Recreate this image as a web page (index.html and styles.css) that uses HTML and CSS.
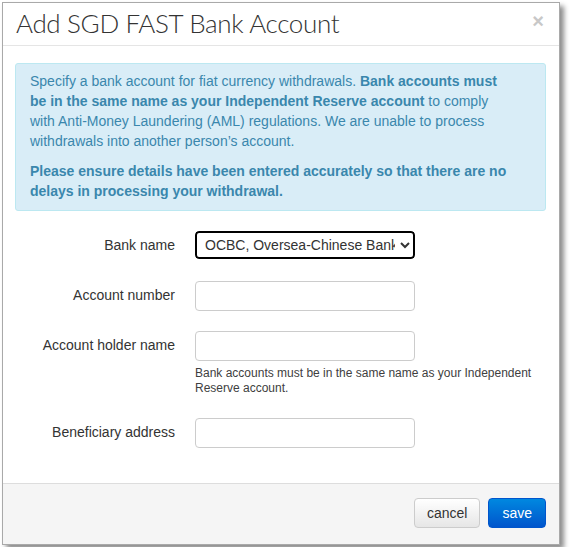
FILE: index.html
```html
<!DOCTYPE html>
<html lang="en">
<head>
    <meta charset="UTF-8">
    <title>Add SGD FAST Bank Account</title>
    <link rel="stylesheet" href="styles.css">
</head>
<body>
    <div class="modal">
        <div class="modal-header">
            <h3>Add SGD FAST Bank Account</h3>
            <span class="close">&times;</span>
        </div>
        <div class="modal-body">
            <div class="alert">
                <p>Specify a bank account for fiat currency withdrawals. <b>Bank accounts must be in the same name as your Independent Reserve account</b> to comply with Anti-Money Laundering (AML) regulations. We are unable to process withdrawals into another person’s account.</p>
                <p><b>Please ensure details have been entered accurately so that there are no delays in processing your withdrawal.</b></p>
            </div>
            <form class="form">
                <div class="row">
                    <label for="bank">Bank name</label>
                    <div class="field">
                        <select id="bank" class="focused">
                            <option>OCBC, Oversea-Chinese Banking Corporation</option>
                        </select>
                    </div>
                </div>
                <div class="row">
                    <label for="number">Account number</label>
                    <div class="field"><input type="text" id="number"></div>
                </div>
                <div class="row">
                    <label for="holder">Account holder name</label>
                    <div class="field">
                        <input type="text" id="holder">
                        <p class="help">Bank accounts must be in the same name as your Independent Reserve account.</p>
                    </div>
                </div>
                <div class="row">
                    <label for="address">Beneficiary address</label>
                    <div class="field"><input type="text" id="address"></div>
                </div>
            </form>
        </div>
        <div class="modal-footer">
            <button type="button" class="btn">cancel</button>
            <button type="button" class="btn btn-primary">save</button>
        </div>
    </div>
</body>
</html>
```

FILE: styles.css
```css
body {
    font-family: "Liberation Sans", Arial, sans-serif;
    font-size: 14px;
    color: #333;
    margin: 0;
    padding: 2px;
    background: #fff;
}

.modal {
    width: 556px;
    border: 1px solid #a9a9a9;
    background: #fff;
    box-shadow: 4px 4px 5px rgba(0, 0, 0, 0.45);
}

.modal-header {
    display: flex;
    justify-content: space-between;
    align-items: flex-start;
    height: 42px;
    padding: 0 15px 0 13px;
    border-bottom: 1px solid #e5e5e5;
}

.modal-header h3 {
    margin: 2px 0 0;
    font-family: Lato, sans-serif;
    font-weight: 300;
    font-size: 26px;
    letter-spacing: -0.35px;
    line-height: 36px;
    color: #333;
}

.close {
    font-size: 20px;
    font-weight: bold;
    color: #c8c8c8;
    line-height: 36px;
}

.modal-body {
    padding: 17px 13px 15px 12px;
}

.alert {
    background-color: #d9edf7;
    border: 1px solid #bce8f1;
    border-radius: 3px;
    color: #3a87ad;
    padding: 7px 14px 9px 14px;
    line-height: 20px;
}

.alert p {
    margin: 0 0 10px;
    width: 480px;
}

.alert p:last-child {
    margin-bottom: 0;
}

.form {
    margin-top: 20px;
}

.row {
    display: flex;
    align-items: flex-start;
    margin-bottom: 20px;
}

.row label {
    flex-shrink: 0;
    width: 160px;
    text-align: right;
    padding-top: 6px;
    margin-right: 20px;
}

.field input,
.field select {
    box-sizing: border-box;
    width: 220px;
    height: 30px;
    border: 1px solid #ccc;
    border-radius: 4px;
    font-family: "Liberation Sans", Arial, sans-serif;
    font-size: 14px;
    color: #333;
    background: #fff;
    padding: 4px 6px;
}

.field select.focused {
    height: 28px;
    border: 2px solid #000;
    outline: 1px solid #fff;
    padding: 0 2px 0 4px;
    margin-bottom: 2px;
}

.help {
    margin: 5px 0 2px;
    width: 350px;
    font-size: 12px;
    line-height: 15px;
    color: #404040;
}

.modal-footer {
    display: flex;
    justify-content: flex-end;
    gap: 8px;
    background: #f5f5f5;
    border-top: 1px solid #ddd;
    padding: 14px 13px 16px;
}

.btn {
    font-family: "Liberation Sans", Arial, sans-serif;
    font-size: 14px;
    height: 30px;
    padding: 0 12px;
    border: 1px solid #ccc;
    border-radius: 4px;
    color: #333;
    background: linear-gradient(#fff, #e6e6e6);
}

.btn-primary {
    color: #fff;
    border-color: #0055cc;
    background: linear-gradient(#0088e0, #0055cc);
    padding: 0 13px;
}
```
